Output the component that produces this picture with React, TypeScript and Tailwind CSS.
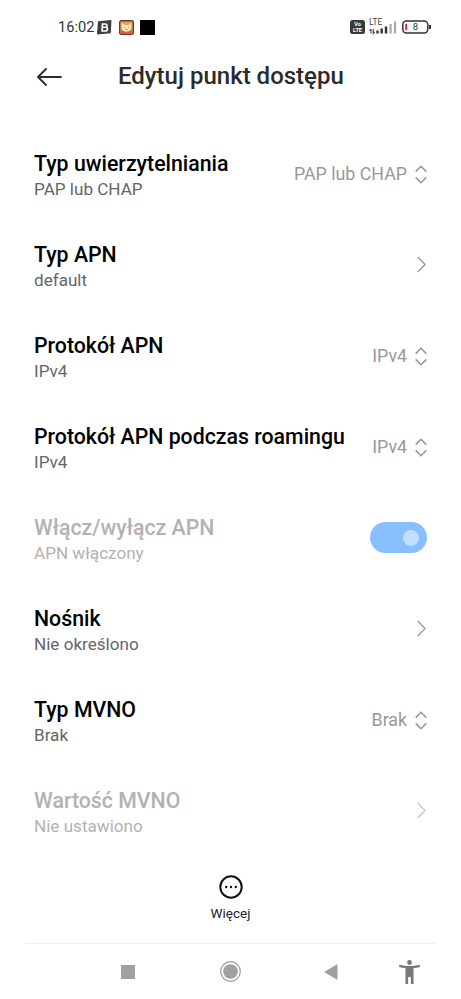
import clsx from "clsx";

type Kind = "select" | "link" | "toggle";

interface Item {
    title: string;
    summary: string;
    kind: Kind;
    value?: string;
    disabled?: boolean;
}

const items: Item[] = [
    { title: "Typ uwierzytelniania", summary: "PAP lub CHAP", kind: "select", value: "PAP lub CHAP" },
    { title: "Typ APN", summary: "default", kind: "link" },
    { title: "Protokół APN", summary: "IPv4", kind: "select", value: "IPv4" },
    { title: "Protokół APN podczas roamingu", summary: "IPv4", kind: "select", value: "IPv4" },
    { title: "Włącz/wyłącz APN", summary: "APN włączony", kind: "toggle", disabled: true },
    { title: "Nośnik", summary: "Nie określono", kind: "link" },
    { title: "Typ MVNO", summary: "Brak", kind: "select", value: "Brak" },
    { title: "Wartość MVNO", summary: "Nie ustawiono", kind: "link", disabled: true },
];

function StatusBar() {
    return (
        <div className="flex h-[54px] items-center pl-[58px] pr-[29px]">
            <span className="text-[14.6px] leading-none text-[#333333]">16:02</span>
            <svg className="ml-[3px]" width="15" height="15" viewBox="0 0 15 15">
                <path d="M1 1.2 14.5 0 13.8 13.2 0 14.6z" fill="#3c3f42" />
                <path d="M5.5 4h2.7c2.4 0 2.4 3 .7 3.3 2.2.2 2.1 3.7-.5 3.7H5.1z" fill="none" stroke="#fff" strokeWidth="1.7" />
                <path d="M5.3 7.3h3.7" stroke="#fff" strokeWidth="1.4" />
            </svg>
            <svg className="ml-[7px]" width="15" height="15" viewBox="0 0 15 15">
                <rect x="0.7" y="0.7" width="13.6" height="13.6" rx="1.6" fill="#f3a04e" stroke="#6b3a2c" strokeWidth="1.4" />
                <path d="M1.5 10.5h12v3h-12z" fill="#e5583f" />
                <path d="M2.8 3 5.5 5h4l2.7-2-.2 6-2.5 2.5h-4L3 9z" fill="#ffecc9" />
                <path d="M5 7.3h1.2M8.8 7.3H10M6.5 9.5h2" stroke="#c8693f" strokeWidth="1" />
            </svg>
            <div className="ml-[6px] size-[15px] bg-black" />

            <div className="ml-auto flex items-center">
                <svg width="15" height="14" viewBox="0 0 15 14">
                    <rect width="15" height="14" rx="2.5" fill="#3a3a3a" />
                    <text x="7.5" y="6.1" fontSize="5.6" fontWeight="700" fill="#fff" textAnchor="middle">Vo</text>
                    <text x="7.5" y="12.4" fontSize="5.6" fontWeight="700" fill="#fff" textAnchor="middle">LTE</text>
                </svg>
                <svg className="ml-[4px]" width="29" height="18" viewBox="0 0 29 18">
                    <text x="0" y="7.3" fontSize="8.5" fill="#4a4a4a">LTE</text>
                    <path d="M2 11v4.5M0.5 12.7 2 11M4.3 11v4.5l1.4-1.7" stroke="#444" strokeWidth="1.1" fill="none" />
                    <path d="M8.5 12.5v3M12.7 10.5v5M17 8.5v7" stroke="#333" strokeWidth="2.4" />
                    <path d="M21.6 6v9.5M26 3.5v12" stroke="#aaa" strokeWidth="2.2" />
                </svg>
                <svg className="ml-[4px]" width="30" height="14" viewBox="0 0 30 14">
                    <rect x="0.8" y="0.9" width="25" height="12" rx="3.6" fill="none" stroke="#333" strokeWidth="1.5" />
                    <path d="M28 5v4" stroke="#333" strokeWidth="2" />
                    <path d="M4.2 3.8v6.4" stroke="#e02a35" strokeWidth="2" />
                    <text x="13.5" y="10.3" fontSize="9.5" fill="#333" textAnchor="middle">8</text>
                </svg>
            </div>
        </div>
    );
}

function UpDown() {
    return (
        <svg className="ml-[8px]" width="12" height="19" viewBox="0 0 12 19" fill="none" stroke="#969696" strokeWidth="1.5">
            <path d="M.7 6.6 6 1.3l5.3 5.3M.7 12.4 6 17.7l5.3-5.3" />
        </svg>
    );
}

function Chevron({ disabled }: { disabled?: boolean }) {
    return (
        <svg
            className={clsx("mr-px", disabled ? "stroke-[#c6c6c6]" : "stroke-[#9a9a9a]")}
            width="9"
            height="17"
            viewBox="0 0 9 17"
            fill="none"
            strokeWidth="1.3"
        >
            <path d="m.8 1 7.3 7.5L.8 16" />
        </svg>
    );
}

function Row({ item }: { item: Item }) {
    return (
        <div className="flex h-[91px] items-center justify-between pl-[34px] pr-[34px]">
            <div className="pt-[4px]">
                <div className={clsx("text-[21.3px] font-medium leading-[27px]", item.disabled ? "text-[#b2b2b2]" : "text-black")}>
                    {item.title}
                </div>
                <div className={clsx("text-[17.1px] leading-[25px]", item.disabled ? "text-[#b2b2b2]" : "text-[#666666]")}>
                    {item.summary}
                </div>
            </div>
            {item.kind === "select" && (
                <div className="flex items-center pt-px text-[17.8px] text-[#999999]">
                    {item.value}
                    <UpDown />
                </div>
            )}
            {item.kind === "link" && <Chevron disabled={item.disabled} />}
            {item.kind === "toggle" && (
                <div className="flex h-[31px] w-[57px] items-center justify-end rounded-full bg-[#88c0ff] pr-[8px]">
                    <div className="size-[16px] rounded-full bg-[#c0defe]" />
                </div>
            )}
        </div>
    );
}

export default function App() {
    return (
        <div className="flex h-[999px] w-[461px] flex-col overflow-hidden bg-white font-['Roboto',sans-serif]">
            <StatusBar />
            <header className="flex h-[45px] items-center pl-[37px]">
                <svg width="25" height="18" viewBox="0 0 25 18" fill="none" stroke="#2b2b2b" strokeWidth="1.8" strokeLinecap="round" strokeLinejoin="round">
                    <path d="M24 9H1M9 1 1 9l8 8" />
                </svg>
                <h1 className="ml-[56px] pb-px text-[24px] font-medium leading-none text-[#2b2b2b]">Edytuj punkt dostępu</h1>
            </header>

            <main className="mt-[29px]">
                {items.map((item) => (
                    <Row key={item.title} item={item} />
                ))}
            </main>

            <div className="flex h-[87px] flex-col items-center pt-[19px]">
                <svg width="24" height="24" viewBox="0 0 24 24">
                    <circle cx="12" cy="12" r="10.7" fill="none" stroke="#111" strokeWidth="2" />
                    <circle cx="7.2" cy="12" r="1.2" fill="#111" />
                    <circle cx="12" cy="12" r="1.2" fill="#111" />
                    <circle cx="16.8" cy="12" r="1.2" fill="#111" />
                </svg>
                <span className="mt-[4px] text-[13.5px] leading-[20px] text-[#222222]">Więcej</span>
            </div>

            <nav className="mx-[25px] flex h-[56px] items-center border-t border-[#f0f0f0]">
                <div className="ml-[96px] size-[14px] bg-[#a0a0a0]" />
                <svg className="ml-[85px]" width="21" height="21" viewBox="0 0 21 21">
                    <circle cx="10.5" cy="10.5" r="9.8" fill="none" stroke="#999" strokeWidth="1.2" />
                    <circle cx="10.5" cy="10.5" r="7.3" fill="#a0a0a0" />
                </svg>
                <svg className="ml-[83px]" width="14" height="16" viewBox="0 0 14 16">
                    <path d="M13.5 0v16L0 8z" fill="#a0a0a0" />
                </svg>
                <svg className="ml-[61px]" width="21" height="24" viewBox="0 0 21 24" fill="#777777">
                    <circle cx="10.5" cy="2.5" r="2.4" />
                    <path d="M.4 4.8C7 6.5 14 6.5 20.6 4.8L21 7c-2.3.6-4.4 1-6.5 1.2V24h-2.6v-7H9.1v7H6.5V8.2C4.4 8 2.3 7.6 0 7z" />
                </svg>
            </nav>
        </div>
    );
}
